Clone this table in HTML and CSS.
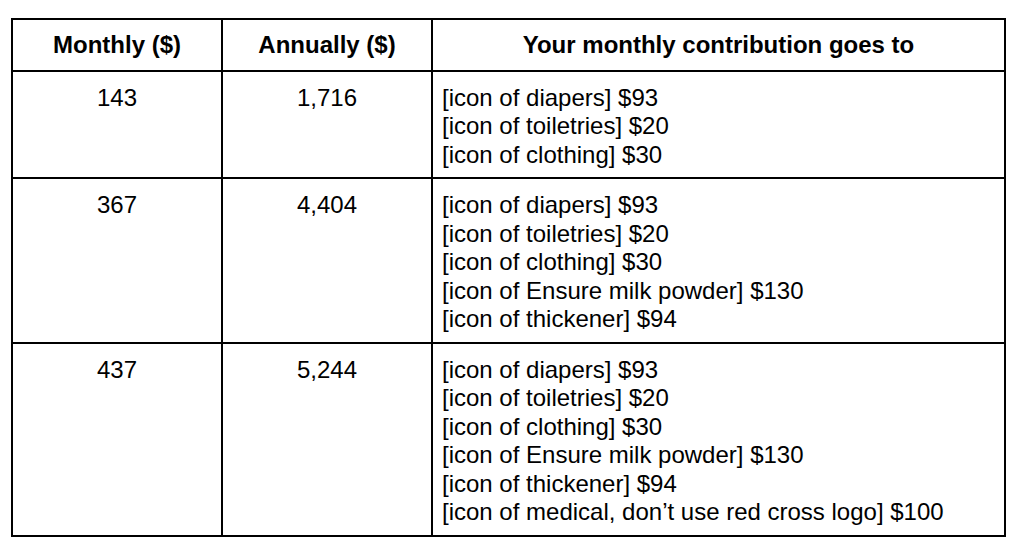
FILE: index.html
```html
<!DOCTYPE html>
<html lang="en">
<head>
<meta charset="utf-8">
<title>Monthly contribution</title>
<link rel="stylesheet" href="styles.css">
</head>
<body>
<table class="plan">
  <colgroup>
    <col class="col-month">
    <col class="col-year">
    <col class="col-items">
  </colgroup>
  <thead>
    <tr>
      <th>Monthly ($)</th>
      <th>Annually ($)</th>
      <th>Your monthly contribution goes to</th>
    </tr>
  </thead>
  <tbody>
    <tr>
      <td class="num">143</td>
      <td class="num">1,716</td>
      <td class="items">
        <div>[icon of diapers] $93</div>
        <div>[icon of toiletries] $20</div>
        <div>[icon of clothing] $30</div>
      </td>
    </tr>
    <tr>
      <td class="num">367</td>
      <td class="num">4,404</td>
      <td class="items">
        <div>[icon of diapers] $93</div>
        <div>[icon of toiletries] $20</div>
        <div>[icon of clothing] $30</div>
        <div>[icon of Ensure milk powder] $130</div>
        <div>[icon of thickener] $94</div>
      </td>
    </tr>
    <tr>
      <td class="num">437</td>
      <td class="num">5,244</td>
      <td class="items">
        <div>[icon of diapers] $93</div>
        <div>[icon of toiletries] $20</div>
        <div>[icon of clothing] $30</div>
        <div>[icon of Ensure milk powder] $130</div>
        <div>[icon of thickener] $94</div>
        <div>[icon of medical, don’t use red cross logo] $100</div>
      </td>
    </tr>
  </tbody>
</table>
</body>
</html>
```
FILE: styles.css
```css
html, body {
  margin: 0;
  padding: 0;
  background: #fff;
}

body {
  font-family: "Liberation Sans", Arial, Helvetica, sans-serif;
  font-size: 24px;
  color: #000;
}

.plan {
  border-collapse: collapse;
  table-layout: fixed;
  width: 995px;
  margin: 18px 0 0 11px;
}

.col-month { width: 210px; }
.col-year { width: 210px; }
.col-items { width: 573px; }

.plan th,
.plan td {
  border: 2px solid #000;
  vertical-align: top;
}

.plan th {
  font-weight: bold;
  text-align: center;
  line-height: 27.5px;
  padding: 11px 10px;
}

.plan td {
  line-height: 28.5px;
  padding: 12px 10px 8px;
}

.plan td.num {
  text-align: center;
}

.plan td.items {
  text-align: left;
  padding-left: 9px;
}
```
